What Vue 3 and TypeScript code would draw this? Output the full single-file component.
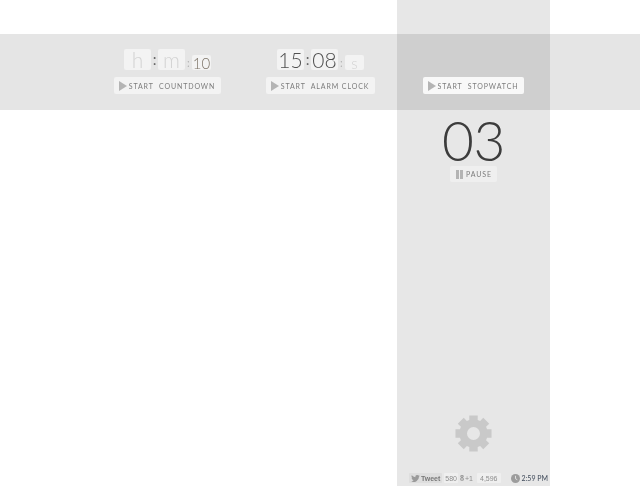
<script setup lang="ts">
interface Field {
  text: string;
  filled: boolean;
  small: boolean;
}

interface Timer {
  fields: Field[];
  action: string;
}

const timers: Timer[] = [
  {
    fields: [
      { text: "h", filled: false, small: false },
      { text: "m", filled: false, small: false },
      { text: "10", filled: true, small: true },
    ],
    action: "START  COUNTDOWN",
  },
  {
    fields: [
      { text: "15", filled: true, small: false },
      { text: "08", filled: true, small: false },
      { text: "s", filled: false, small: true },
    ],
    action: "START  ALARM CLOCK",
  },
];

const stopwatchLabel = "START  STOPWATCH";

// eight square teeth around a 18.5 radius wheel
function gearPath(): string {
  const c = 18.5;
  const point = (r: number, a: number) =>
    `${(c + r * Math.cos(a)).toFixed(2)} ${(c + r * Math.sin(a)).toFixed(2)}`;
  const parts: string[] = [];
  for (let i = 0; i < 8; i++) {
    const a = (i * Math.PI) / 4 - Math.PI / 2;
    parts.push(point(14.2, a - 0.3), point(18.5, a - 0.23), point(18.5, a + 0.23), point(14.2, a + 0.3));
  }
  const hole = `M${c} ${c - 6.5}a6.500 6.500 0 1 0 0 13a6.500 6.500 0 1 0 0-13z`;
  return `M${parts.join("L")}z${hole}`;
}

const gear = gearPath();
</script>

<template>
  <div class="page">
    <aside class="column">
      <div class="elapsed">
        <div class="big-number">03</div>
        <button class="btn pause">
          <span class="pause-icon"><i></i><i></i></span>
          <span>PAUSE</span>
        </button>
      </div>

      <div class="foot">
        <svg class="gear" viewBox="0 0 37 37" width="37" height="37">
          <path fill-rule="evenodd" fill="#c9c9c9" :d="gear" />
        </svg>
        <div class="social">
          <span class="chip tweet">
            <svg viewBox="0 0 16 13" width="9" height="7">
              <path
                fill="#9a9a9a"
                d="M16 1.500a6.500 6.500 0 0 1-1.900.5A3.300 3.300 0 0 0 15.500.2a6.500 6.500 0 0 1-2.100.8 3.300 3.300 0 0 0-5.600 3A9.300 9.300 0 0 1 1.100.6a3.300 3.300 0 0 0 1 4.400 3.300 3.300 0 0 1-1.500-.4 3.300 3.300 0 0 0 2.600 3.200 3.300 3.300 0 0 1-1.500.1 3.300 3.300 0 0 0 3.100 2.300A6.600 6.600 0 0 1 0 11.500 9.300 9.300 0 0 0 14.400 3.200 6.600 6.600 0 0 0 16 1.500z"
              />
            </svg>
            Tweet
          </span>
          <span class="chip count">580</span>
          <span class="chip plus"><b>8</b>+1</span>
          <span class="chip count wide">4,596</span>
          <span class="clock">
            <svg viewBox="0 0 10 10" width="9" height="9">
              <circle cx="5" cy="5" r="5" fill="#9c9c9c" />
              <path d="M5 2v3.200l2 1.200" fill="none" stroke="#e6e6e6" stroke-width="1" />
            </svg>
            2:59 PM
          </span>
        </div>
      </div>
    </aside>

    <section class="band">
      <div v-for="timer in timers" :key="timer.action" class="timer">
        <div class="fields">
          <template v-for="(field, i) in timer.fields" :key="i">
            <span v-if="i > 0" class="sep" :class="{ faint: field.small }">:</span>
            <span class="field" :class="{ filled: field.filled, small: field.small }">{{ field.text }}</span>
          </template>
        </div>
        <button class="btn start">
          <span class="play"></span>
          <span>{{ timer.action }}</span>
        </button>
      </div>
      <div class="timer stopwatch">
        <button class="btn start">
          <span class="play"></span>
          <span>{{ stopwatchLabel }}</span>
        </button>
      </div>
    </section>
  </div>
</template>

<style>
html,
body {
  background: #fff;
}
</style>

<style scoped>
.page {
  display: grid;
  grid-template-columns: 397px 153px 90px;
  grid-template-rows: 34px 76px 376px;
  width: 640px;
  height: 486px;
  overflow: hidden;
  will-change: transform;

  font-family: "Lato", "Liberation Sans", sans-serif;
  color: #444;
}

.column {
  grid-column: 2;
  grid-row: 1 / 4;

  display: flex;
  flex-direction: column;
  align-items: center;

  padding-top: 110px;

  background: #e7e7e7;
}

.band {
  grid-column: 1 / 4;
  grid-row: 2;
  z-index: 1;

  display: grid;
  grid-template-columns: repeat(3, 153px);
  padding-left: 91px;

  background: rgba(0, 0, 0, 0.1);
}

.timer {
  display: flex;
  flex-direction: column;
  align-items: center;

  padding-top: 15px;
}

.stopwatch {
  padding-top: 43px;
}

.fields {
  display: flex;
  align-items: flex-end;
  height: 21px;
  margin-bottom: 7px;
}

.field {
  display: block;
  width: 27px;
  height: 21px;

  font-size: 21px;
  font-weight: 300;
  line-height: 21px;
  text-align: center;
  color: #d4d4d4;

  background: #f3f3f3;
  border-radius: 2px;
}

.field.filled {
  color: #505050;
}

.field.small {
  width: 19px;
  height: 15px;

  font-size: 15px;
  line-height: 16px;
}

.field.small.filled {
  color: #7d7468;
}

.sep {
  width: 7px;
  font-size: 15px;
  line-height: 21px;
  text-align: center;
  color: #666;
}

.sep.faint {
  color: #b5b5b5;
  font-size: 11px;
  line-height: 15px;
}

.btn {
  display: flex;
  align-items: center;
  gap: 2px;
  height: 17px;
  padding: 0 6px 0 5px;

  font-family: inherit;
  font-size: 7px;
  letter-spacing: 0.9px;
  white-space: pre;
  color: #7c7c7c;

  background: #f3f3f3;
  border: none;
  border-radius: 2px;
}

.stopwatch .btn {
  background: #f8f8f8;
}

.play {
  display: block;
  width: 0;
  height: 0;

  border-left: 8px solid #b4b4b4;
  border-top: 5px solid transparent;
  border-bottom: 5px solid transparent;
}

.elapsed {
  display: flex;
  flex-direction: column;
  align-items: center;
}

.big-number {
  margin-top: 4px;
  height: 52px;

  font-size: 55px;
  font-weight: 300;
  line-height: 52px;
  letter-spacing: -0.5px;
  color: #3c3c3c;
}

.pause {
  height: 16px;
  padding: 0 5px 0 6px;
  gap: 3px;
  background: #efefef;
}

.pause-icon {
  display: flex;
  gap: 1px;
}

.pause-icon i {
  display: block;
  width: 3px;
  height: 9px;
  background: #b4b4b4;
}

.foot {
  display: flex;
  flex-direction: column;
  align-items: center;
  width: 100%;
  margin-top: auto;
}

.gear {
  margin-bottom: 18px;
}

.social {
  display: flex;
  align-items: center;
  gap: 2px;
  width: 100%;
  height: 16px;
  padding-left: 12px;
  box-sizing: border-box;

  font-family: "Liberation Sans", sans-serif;
  font-size: 7px;
  color: #8d8d8d;
}

.chip {
  display: flex;
  align-items: center;
  height: 10px;
  padding: 0 1px;

  background: #efefef;
  border-radius: 1px;
}

.tweet {
  gap: 1px;
  padding: 0 2px;
  font-weight: 700;
  color: #777;
  background: #dedede;
}

.wide {
  padding: 0 3px;
  margin-left: 2px;
}

.plus b {
  font-family: "Liberation Serif", serif;
  font-size: 8px;
  margin-right: 1px;
}

.plus {
  background: transparent;
  padding: 0;
}

.clock {
  display: flex;
  align-items: center;
  gap: 2px;
  margin-left: auto;
  margin-right: 2px;

  font-family: "Lato", sans-serif;
  font-size: 7px;
  color: #3f4a5a;
}
</style>
